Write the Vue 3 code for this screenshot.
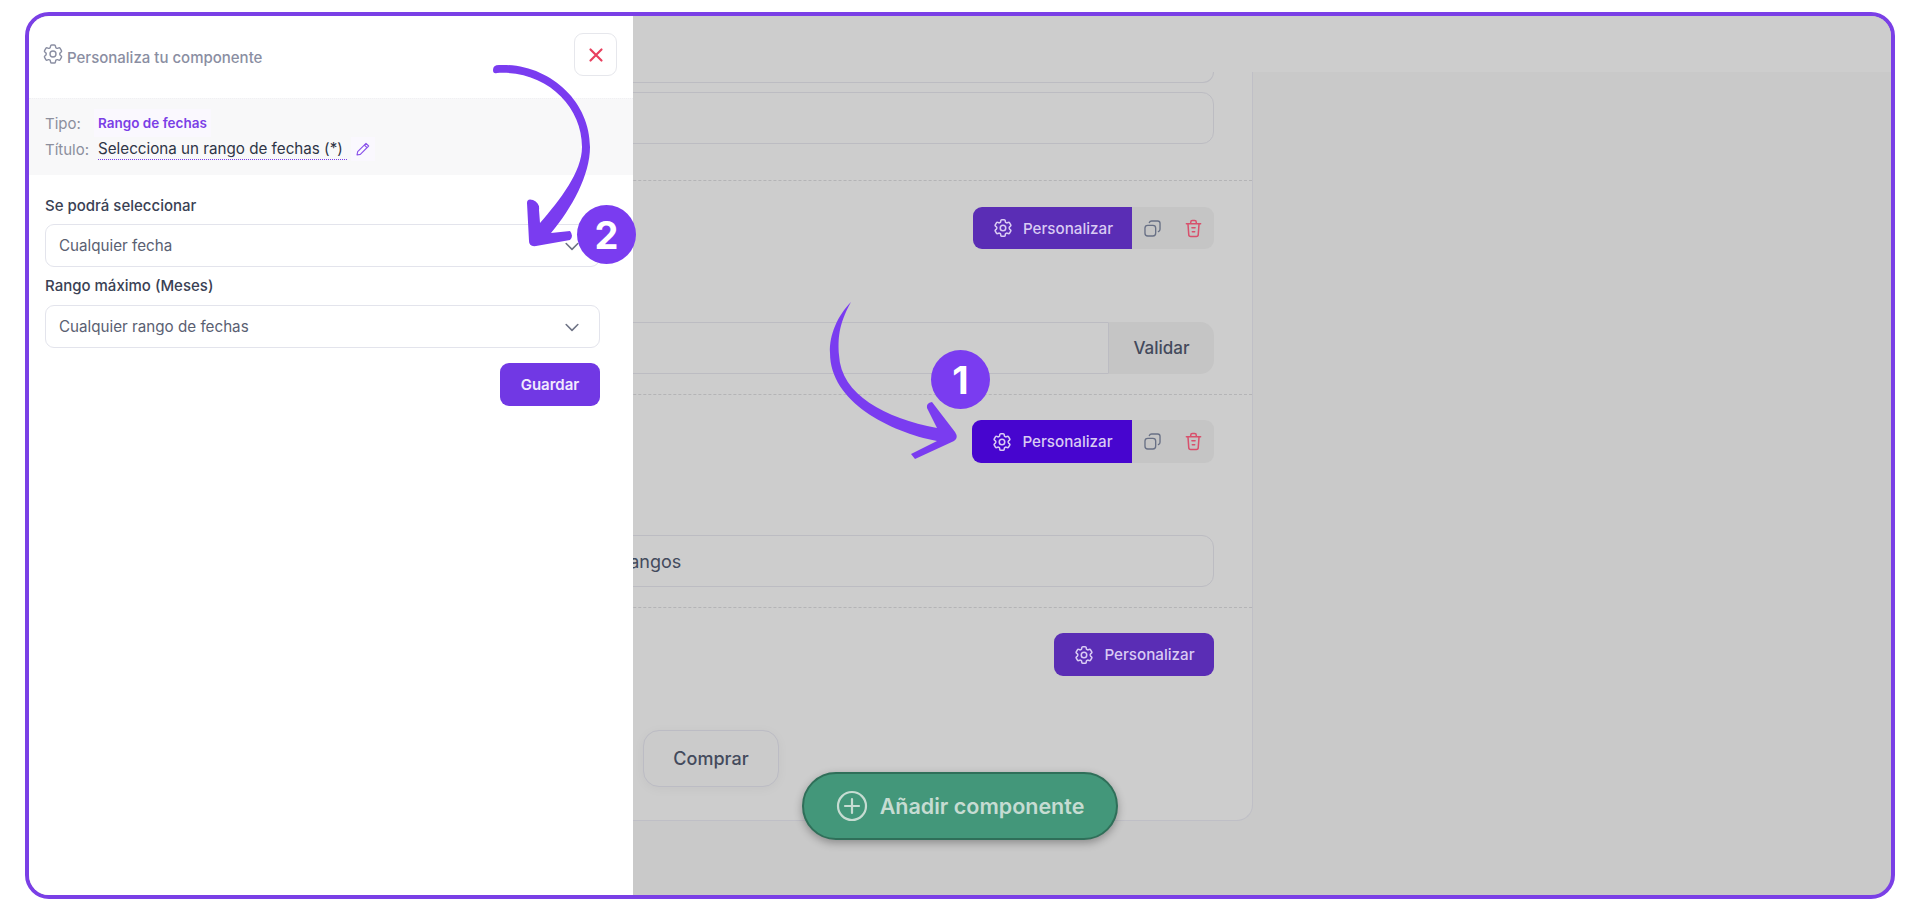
<template>
  <div class="frame">
    <aside class="panel">
      <header class="panel-head">
        <div class="panel-title">
          <svg class="gear-icon" viewBox="0 0 24 24" fill="none" stroke="currentColor" stroke-width="1.4">
            <path :d="gearPath" />
            <circle cx="12" cy="12" r="3" />
          </svg>
          <span>Personaliza tu componente</span>
        </div>
        <button class="close-btn">
          <svg viewBox="0 0 24 24" fill="none" stroke="currentColor" stroke-width="2.4" stroke-linecap="round">
            <path d="M6 6l12 12M18 6L6 18" />
          </svg>
        </button>
      </header>

      <div class="info-band">
        <div class="info-row">
          <span class="info-label">Tipo:</span>
          <span class="type-tag">Rango de fechas</span>
        </div>
        <div class="info-row">
          <span class="info-label">Título:</span>
          <span class="title-value">Selecciona un rango de fechas (*)</span>
          <span class="pencil">
            <svg viewBox="0 0 24 24" fill="none" stroke="currentColor" stroke-width="1.7" stroke-linejoin="round">
              <path d="M16.5 3.5l4 4L8 20l-5 1 1-5z" />
              <path d="M14 6l4 4" />
            </svg>
          </span>
        </div>
      </div>

      <div class="panel-body">
        <div v-for="field in fields" :key="field.label" class="field">
          <label class="field-label">{{ field.label }}</label>
          <div class="select-box">
            <span>{{ field.value }}</span>
            <svg viewBox="0 0 24 24" fill="none" stroke="currentColor" stroke-width="1.9" stroke-linecap="round" stroke-linejoin="round">
              <path d="M5 9l7 7 7-7" />
            </svg>
          </div>
        </div>
        <div class="panel-actions">
          <button class="save-btn">Guardar</button>
        </div>
      </div>
    </aside>

    <main class="main">
      <div class="top-bar"></div>
      <div class="card">
        <section class="block block-first">
          <div class="input-stub"></div>
          <div class="text-input"></div>
        </section>

        <section class="block block-second">
          <div class="toolbar">
            <button class="custom-btn">
              <svg viewBox="0 0 24 24" fill="none" stroke="currentColor" stroke-width="1.7">
                <path :d="gearPath" />
                <circle cx="12" cy="12" r="3" />
              </svg>
              Personalizar
            </button>
            <div class="tool-icons">
              <svg class="copy-icon" viewBox="0 0 24 24" fill="none" stroke="currentColor" stroke-width="1.7" stroke-linejoin="round">
                <rect x="2.5" y="8" width="13.5" height="13.5" rx="3.5" />
                <path d="M8 4.5c.5-1.3 1.6-2 3-2h7.5c1.7 0 3 1.3 3 3V13c0 1.4-.7 2.5-2 3" stroke-linecap="round" />
              </svg>
              <svg class="trash-icon" viewBox="0 0 24 24" fill="none" stroke="currentColor" stroke-width="1.9" stroke-linecap="round" stroke-linejoin="round">
                <path d="M3 6h18M8.5 6V4a2 2 0 0 1 2-2h3a2 2 0 0 1 2 2v2M5 6l1 13.500A2.500 2.500 0 0 0 8.500 22h7a2.500 2.500 0 0 0 2.500-2.500L19 6M10 11h4M10.500 16h3" />
              </svg>
            </div>
          </div>
          <div class="validate-input">
            <div class="validate-field"></div>
            <button class="validate-btn">Validar</button>
          </div>
        </section>

        <section class="block block-third">
          <div class="toolbar">
            <button class="custom-btn custom-btn-active">
              <svg viewBox="0 0 24 24" fill="none" stroke="currentColor" stroke-width="1.7">
                <path :d="gearPath" />
                <circle cx="12" cy="12" r="3" />
              </svg>
              Personalizar
            </button>
            <div class="tool-icons">
              <svg class="copy-icon" viewBox="0 0 24 24" fill="none" stroke="currentColor" stroke-width="1.7" stroke-linejoin="round">
                <rect x="2.5" y="8" width="13.5" height="13.5" rx="3.5" />
                <path d="M8 4.5c.5-1.3 1.6-2 3-2h7.5c1.7 0 3 1.3 3 3V13c0 1.4-.7 2.5-2 3" stroke-linecap="round" />
              </svg>
              <svg class="trash-icon" viewBox="0 0 24 24" fill="none" stroke="currentColor" stroke-width="1.9" stroke-linecap="round" stroke-linejoin="round">
                <path d="M3 6h18M8.5 6V4a2 2 0 0 1 2-2h3a2 2 0 0 1 2 2v2M5 6l1 13.500A2.500 2.500 0 0 0 8.500 22h7a2.500 2.500 0 0 0 2.500-2.500L19 6M10 11h4M10.500 16h3" />
              </svg>
            </div>
          </div>
          <div class="text-input range-input">Cualquier fecha en varios rangos</div>
        </section>

        <section class="block block-last">
          <div class="toolbar">
            <button class="custom-btn custom-btn-solo">
              <svg viewBox="0 0 24 24" fill="none" stroke="currentColor" stroke-width="1.7">
                <path :d="gearPath" />
                <circle cx="12" cy="12" r="3" />
              </svg>
              Personalizar
            </button>
          </div>
          <button class="buy-btn">Comprar</button>
        </section>
      </div>
    </main>

    <button class="add-btn">
      <svg viewBox="0 0 32 32" fill="none" stroke="currentColor" stroke-width="2.2" stroke-linecap="round">
        <circle cx="16" cy="16" r="14" />
        <path d="M16 9v14M9 16h14" />
      </svg>
      Añadir componente
    </button>

    <svg class="arrows" viewBox="29 16 1862 879">
      <path d="M493 70Q493 65 499 65C548 63 590 100 590 147C590 175 572 208 551 233L570 231Q574 236 570 240L536 246Q529 247 529 241L527 203Q527 198 533 200Q540 203 539 210L540 223C560 200 582 172 582 147C582 105 545 70 497 73Q493 74 493 70Z" />
      <path d="M851 302C838 325 838 340 839 355C841 395 885 418 937 428L927 408Q926 403 932 402L955 432Q959 438 954 441L915 459L911 454L937 441C890 432 830 402 830 353C829 335 838 315 851 302Z" />
    </svg>
    <div class="badge badge-one">1</div>
    <div class="badge badge-two">2</div>
  </div>
</template>

<script setup>
const gearPath = 'M9.594 3.94c.09-.542.56-.94 1.11-.94h2.593c.55 0 1.02.398 1.11.94l.213 1.281c.063.374.313.686.645.87.074.04.147.083.22.127.325.196.72.257 1.075.124l1.217-.456a1.125 1.125 0 0 1 1.37.49l1.296 2.247a1.125 1.125 0 0 1-.26 1.431l-1.003.827c-.293.241-.438.613-.43.992a7.723 7.723 0 0 1 0 .255c-.008.378.137.75.43.991l1.004.827c.424.35.534.955.26 1.43l-1.298 2.247a1.125 1.125 0 0 1-1.369.491l-1.217-.456c-.355-.133-.75-.072-1.076.124a6.47 6.47 0 0 1-.22.128c-.331.183-.581.495-.644.869l-.213 1.281c-.09.543-.56.94-1.11.94h-2.594c-.55 0-1.019-.398-1.11-.94l-.213-1.281c-.062-.374-.312-.686-.644-.87a6.52 6.52 0 0 1-.22-.127c-.325-.196-.72-.257-1.076-.124l-1.217.456a1.125 1.125 0 0 1-1.369-.49l-1.297-2.247a1.125 1.125 0 0 1 .26-1.431l1.004-.827c.292-.24.437-.613.43-.991a6.932 6.932 0 0 1 0-.255c.007-.38-.138-.751-.43-.992l-1.004-.827a1.125 1.125 0 0 1-.26-1.43l1.297-2.247a1.125 1.125 0 0 1 1.37-.491l1.216.456c.356.133.751.072 1.076-.124.072-.044.146-.086.22-.128.332-.183.582-.495.644-.869l.214-1.28Z'

const fields = [
  { label: 'Se podrá seleccionar', value: 'Cualquier fecha' },
  { label: 'Rango máximo (Meses)', value: 'Cualquier rango de fechas' }
]
</script>

<style>
html,
body {
  margin: 0;
  background: #fff;
}
</style>

<style scoped>
.frame {
  position: relative;
  box-sizing: border-box;
  display: flex;
  width: 1870px;
  height: 887px;
  margin: 12px 0 0 25px;
  border: 4px solid #7a3fe6;
  border-radius: 24px;
  overflow: hidden;
  background: #c9c9c9;
  font-family: Inter, "Liberation Sans", sans-serif;
}

button {
  font-family: inherit;
  border: 0;
  padding: 0;
}

/* panel */
.panel {
  position: relative;
  z-index: 2;
  flex: 0 0 604px;
  background: #fff;
}

.panel-head {
  box-sizing: border-box;
  height: 82px;
  display: flex;
  justify-content: space-between;
  padding: 17px 16px 0 12px;
}

.panel-title {
  display: flex;
  align-items: flex-start;
  gap: 2px;
  padding-top: 11px;
  font-size: 15px;
  font-weight: 500;
  color: #8a8ea2;
}

.panel-title span {
  margin-top: 3px;
  line-height: 22px;
}

.gear-icon {
  width: 24px;
  height: 24px;
  margin-top: -2px;
}

.close-btn {
  box-sizing: border-box;
  width: 43px;
  height: 43px;
  background: #fff;
  border: 1px solid #e6e7ec;
  border-radius: 9px;
  color: #e8405f;
  display: flex;
  align-items: center;
  justify-content: center;
}

.close-btn svg {
  width: 22px;
  height: 22px;
}

.info-band {
  box-sizing: border-box;
  height: 77px;
  padding: 11px 16px 0;
  background: #f8f8f9;
  border-top: 1px dotted #f0f0f3;
}

.info-row {
  display: flex;
  align-items: center;
  height: 26px;
  font-size: 15px;
}

.info-label {
  width: 53px;
  color: #8c8f9d;
}

.type-tag {
  padding: 2px 0;
  font-size: 13.5px;
  font-weight: 600;
  color: #7a3fe6;
  background: #faf8fe;
  box-shadow: 0 0 0 4px #faf8fe;
}

.title-value {
  font-size: 15.2px;
  color: #2f3547;
  border-bottom: 1px dotted #7a3fe6;
  padding: 1px 4px 1px 0;
}

.pencil {
  display: flex;
  margin-left: 8px;
  color: #8a52ea;
  background: #faf8fe;
  box-shadow: 0 0 0 4px #faf8fe;
}

.pencil svg {
  width: 16px;
  height: 16px;
}

.panel-body {
  padding: 0 33px 0 16px;
}

.field-label {
  display: block;
  height: 22px;
  font-size: 15px;
  font-weight: 500;
  line-height: 22px;
  color: #3a4154;
}

.field:first-child {
  padding-top: 20px;
}

.field + .field {
  padding-top: 8px;
}

.select-box {
  box-sizing: border-box;
  height: 43px;
  margin-top: 7px;
  padding: 0 17px 0 13px;
  display: flex;
  align-items: center;
  justify-content: space-between;
  border: 1px solid #e3e4ec;
  border-radius: 9px;
  font-size: 15.2px;
  color: #5a6072;
}

.field + .field .select-box {
  margin-top: 8px;
}

.select-box svg {
  width: 20px;
  height: 20px;
  color: #6f7486;
}

.panel-actions {
  display: flex;
  justify-content: flex-end;
  margin-top: 15px;
}

.save-btn {
  width: 100px;
  height: 43px;
  background: #7138e4;
  border-radius: 9px;
  color: #f1eafd;
  font-size: 15px;
  font-weight: 600;
}

/* page behind the panel */
.main {
  flex: 1;
  min-width: 0;
  display: flex;
  flex-direction: column;
}

.top-bar {
  flex: 0 0 56px;
  background: #cdcdcd;
}

.card {
  box-sizing: border-box;
  width: 870px;
  height: 749px;
  margin-left: -250px;
  background: #cdcdcd;
  border-right: 1px solid #bfbfc6;
  border-bottom: 1px solid #bfbfc6;
  border-bottom-right-radius: 16px;
}

.block {
  box-sizing: border-box;
  padding-right: 38px;
  border-bottom: 1px dashed #b4b4b6;
}

.block-first {
  height: 109px;
}

.block-second {
  height: 214px;
  padding-top: 26px;
}

.block-third {
  height: 213px;
  padding-top: 25px;
}

.block-last {
  padding-top: 25px;
  border-bottom: 0;
}

.input-stub {
  height: 11px;
  border: 1px solid #bcbcc2;
  border-top: 0;
  border-radius: 0 0 12px 12px;
  margin-bottom: 9px;
  box-sizing: border-box;
}

.text-input {
  box-sizing: border-box;
  height: 52px;
  border: 1px solid #bcbcc2;
  border-radius: 12px;
}

.toolbar {
  display: flex;
  justify-content: flex-end;
}

.custom-btn {
  width: 159px;
  height: 42px;
  display: flex;
  align-items: center;
  justify-content: center;
  gap: 9px;
  background: #5a2db5;
  border-radius: 9px 0 0 9px;
  color: #d9cbf3;
  font-size: 15.2px;
  font-weight: 500;
}

.custom-btn svg {
  width: 22px;
  height: 22px;
}

.custom-btn-active {
  width: 160px;
  height: 43px;
  background: #4705cf;
}

.custom-btn-solo {
  width: 160px;
  height: 43px;
  border-radius: 9px;
}

.tool-icons {
  width: 82px;
  display: flex;
  align-items: center;
  gap: 22px;
  padding-left: 11px;
  box-sizing: border-box;
  background: #c5c5c5;
  border-radius: 0 9px 9px 0;
}

.copy-icon {
  width: 19px;
  height: 19px;
  color: #687085;
}

.trash-icon {
  width: 19px;
  height: 21px;
  color: #d8506c;
}

.validate-input {
  display: flex;
  height: 52px;
  margin-top: 73px;
}

.validate-field {
  flex: 1;
  border: 1px solid #bcbcc2;
  border-radius: 12px 0 0 12px;
}

.validate-btn {
  width: 105px;
  background: #c5c5c5;
  border-radius: 0 14px 14px 0;
  color: #434a5c;
  font-size: 17px;
  font-weight: 500;
}

.range-input {
  margin-top: 72px;
  display: flex;
  align-items: center;
  padding-left: 16px;
  font-size: 18px;
  color: #434a5c;
  white-space: nowrap;
}

.buy-btn {
  display: block;
  box-sizing: border-box;
  width: 136px;
  height: 57px;
  margin: 54px 0 0 260px;
  background: #cbcbcb;
  border: 1px solid #bcbcc4;
  border-radius: 16px;
  box-shadow: 0 2px 12px rgba(0, 0, 0, 0.04);
  color: #434a5c;
  font-size: 18px;
  font-weight: 500;
}

.add-btn {
  position: absolute;
  z-index: 1;
  left: 50%;
  bottom: 55px;
  transform: translateX(-50%);
  box-sizing: border-box;
  width: 316px;
  height: 68px;
  display: flex;
  align-items: center;
  justify-content: center;
  gap: 12px;
  background: #43977a;
  border: 2px solid #2f6f59;
  border-radius: 34px;
  box-shadow: 0 3px 8px rgba(0, 0, 0, 0.3);
  color: #c6dcd2;
  font-size: 21.5px;
  font-weight: 600;
}

.add-btn svg {
  width: 32px;
  height: 32px;
}

/* annotations */
.arrows {
  position: absolute;
  z-index: 3;
  left: 0;
  top: 0;
  width: 1862px;
  height: 879px;
  fill: #7a3cf0;
  pointer-events: none;
}

.badge {
  position: absolute;
  z-index: 4;
  width: 59px;
  height: 59px;
  display: flex;
  align-items: center;
  justify-content: center;
  border-radius: 50%;
  background: #7a3cf0;
  color: #fff;
  font-size: 38px;
  font-weight: 700;
}

.badge-one {
  left: 902px;
  top: 334px;
}

.badge-two {
  left: 548px;
  top: 189px;
}
</style>
